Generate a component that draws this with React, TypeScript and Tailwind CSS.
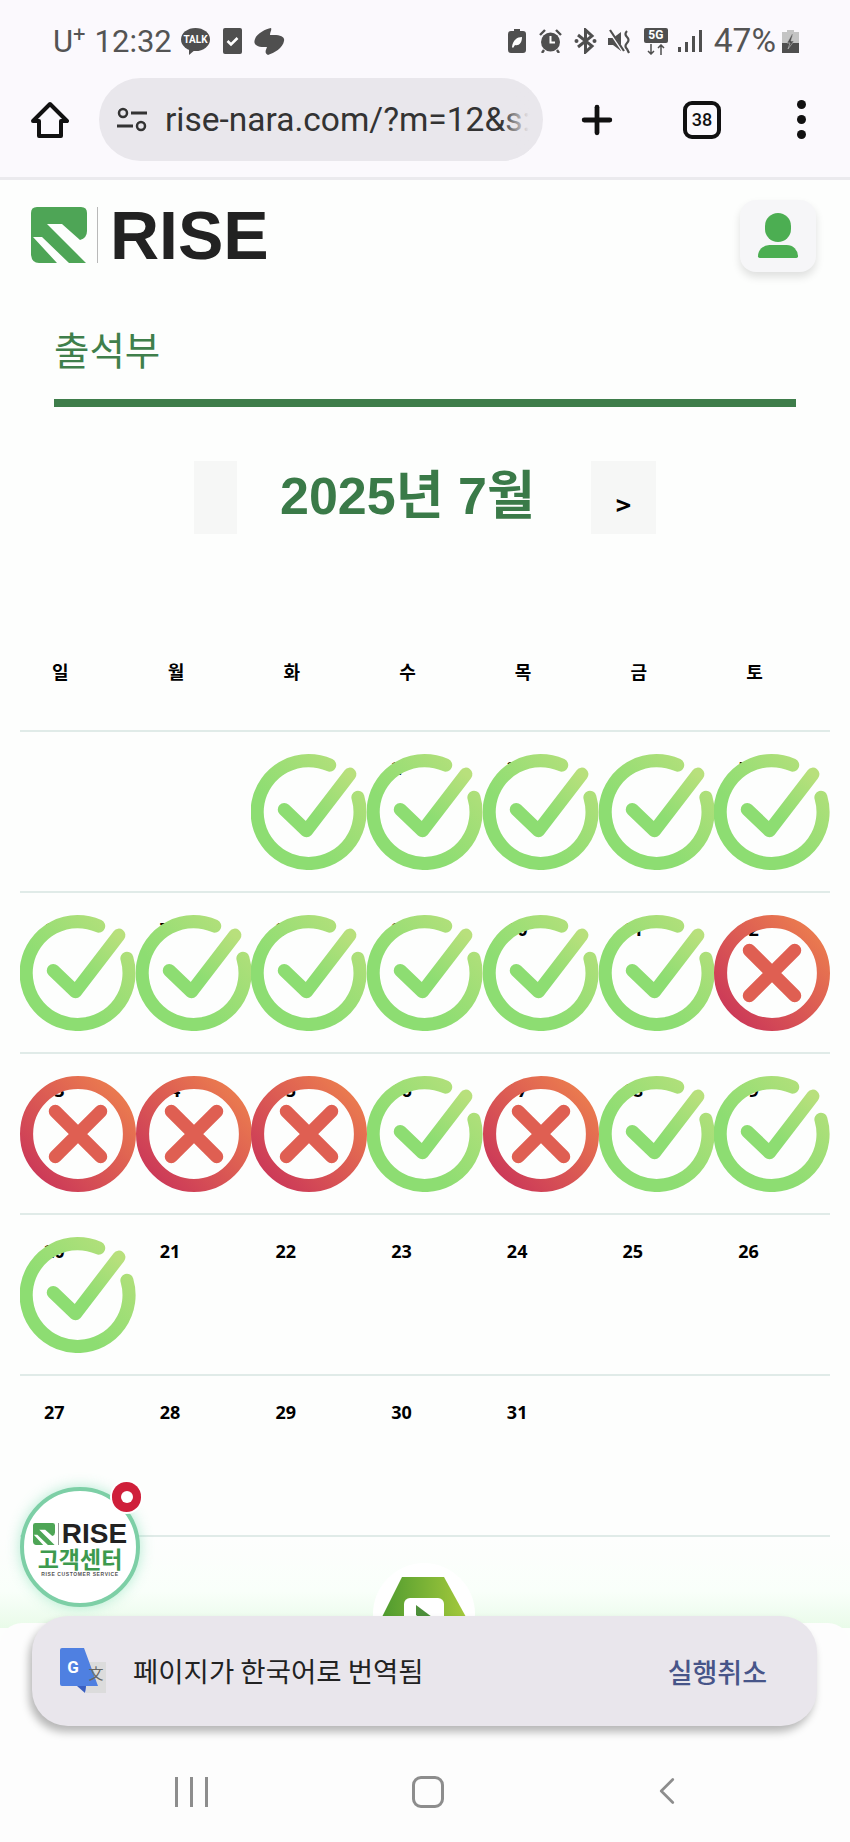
import React from "react";
import { ChevronLeft, Plus } from "lucide-react";

const weekdays = ["일", "월", "화", "수", "목", "금", "토"];

// null = empty cell, status: o = attended, x = missed
type Cell = { day: number; status?: "o" | "x" } | null;

const rows: Cell[][] = [
  [null, null, { day: 1, status: "o" }, { day: 2, status: "o" }, { day: 3, status: "o" }, { day: 4, status: "o" }, { day: 5, status: "o" }],
  [{ day: 6, status: "o" }, { day: 7, status: "o" }, { day: 8, status: "o" }, { day: 9, status: "o" }, { day: 10, status: "o" }, { day: 11, status: "o" }, { day: 12, status: "x" }],
  [{ day: 13, status: "x" }, { day: 14, status: "x" }, { day: 15, status: "x" }, { day: 16, status: "o" }, { day: 17, status: "x" }, { day: 18, status: "o" }, { day: 19, status: "o" }],
  [{ day: 20, status: "o" }, { day: 21 }, { day: 22 }, { day: 23 }, { day: 24 }, { day: 25 }, { day: 26 }],
  [{ day: 27 }, { day: 28 }, { day: 29 }, { day: 30 }, { day: 31 }, null, null],
];

const CheckMark = () => (
  <svg viewBox="0 0 115 115" className="absolute left-0 top-[22px] w-[116px] h-[116px]">
    <defs>
      <linearGradient id="okGrad" x1="0" y1="1" x2="1" y2="0">
        <stop offset="0.35" stopColor="#8ddd72" />
        <stop offset="1" stopColor="#b8e07c" />
      </linearGradient>
    </defs>
    <path
      d="M106 43 A51 51 0 1 1 78 11"
      fill="none"
      stroke="url(#okGrad)"
      strokeWidth="13"
      strokeLinecap="round"
    />
    <path
      d="M33 55 L55 76 L98 20"
      fill="none"
      stroke="url(#okGrad)"
      strokeWidth="13"
      strokeLinecap="round"
      strokeLinejoin="round"
    />
  </svg>
);

const CrossMark = () => (
  <svg viewBox="0 0 115 115" className="absolute left-0 top-[22px] w-[116px] h-[116px]">
    <defs>
      <linearGradient id="noGrad" x1="0" y1="1" x2="1" y2="0">
        <stop offset="0.1" stopColor="#cc3a58" />
        <stop offset="0.9" stopColor="#ea7a4f" />
      </linearGradient>
    </defs>
    <circle cx="57.5" cy="57.5" r="51" fill="none" stroke="url(#noGrad)" strokeWidth="13" />
    <path d="M35 35 L80 80 M80 35 L35 80" stroke="#df5f52" strokeWidth="13" strokeLinecap="round" />
  </svg>
);

const RiseMark = ({ className }: { className: string }) => (
  <svg viewBox="0 0 56 56" className={className}>
    <path
      d="M6 0H50Q56 0 56 6V24Q56 31 49 33L31 17H16L55 56H38L11 30H2L26 56H8Q1 56 0 48V6Q0 0 6 0Z"
      fill="#4ea556"
    />
  </svg>
);

const StatusIconsLeft = () => (
  <div className="flex items-center ml-[9px]">
    <svg viewBox="0 0 29 27" className="w-[29px] h-[27px]">
      <ellipse cx="14.5" cy="11.5" rx="14.5" ry="11.5" fill="#4f4f4f" />
      <path d="M8 19 L8 27 L15 21Z" fill="#4f4f4f" />
      <text x="14.5" y="15" textAnchor="middle" fontSize="10" fontWeight="700" fill="#fff" fontFamily="Roboto, sans-serif">
        TALK
      </text>
    </svg>
    <svg viewBox="0 0 19 26" className="w-[19px] h-[26px] ml-[13px]">
      <rect width="19" height="26" rx="2" fill="#4f4f4f" />
      <path d="M4.5 13 L8 16.5 L14.5 10" fill="none" stroke="#fff" strokeWidth="2.6" />
    </svg>
    <svg viewBox="0 0 31 27" className="w-[31px] h-[27px] ml-3">
      <path
        d="M17 0 C12 1 3 5 1 11 C-1 16 2 19 10 19 L13 19 C12 22 10 25 14 27 C20 25 29 20 30 13 C31 9 27 7 20 7 L16 7 C16 4 18 2 17 0Z"
        fill="#4f4f4f"
      />
    </svg>
  </div>
);

const StatusIconsRight = () => (
  <div className="flex items-center">
    {/* eco battery */}
    <svg viewBox="0 0 18 24" className="w-[18px] h-[24px]">
      <path d="M6 0H12V2H15Q18 2 18 5V21Q18 24 15 24H3Q0 24 0 21V5Q0 2 3 2H6Z" fill="#4f4f4f" />
      <path d="M4 18 C5 11 9 8 14 8 C14 14 11 17 7 16 L5 19Z" fill="#fff" />
    </svg>
    {/* alarm */}
    <svg viewBox="0 0 23 24" className="w-[23px] h-[24px] ml-[13px]">
      <circle cx="11.5" cy="13" r="9.5" fill="#4f4f4f" />
      <path d="M1 6 L6 1 M22 6 L17 1 M5 21 L3 24 M18 21 L20 24" stroke="#4f4f4f" strokeWidth="2.4" />
      <path d="M11.5 7 V13.5 H16" fill="none" stroke="#fff" strokeWidth="2" />
    </svg>
    {/* bluetooth */}
    <svg viewBox="0 0 23 26" className="w-[23px] h-[26px] ml-3">
      <path d="M4 7 L18 18 L11.5 24 V2 L18 8 L4 19" fill="none" stroke="#4f4f4f" strokeWidth="3" />
      <circle cx="2.5" cy="13" r="2" fill="#4f4f4f" />
      <circle cx="20.5" cy="13" r="2" fill="#4f4f4f" />
    </svg>
    {/* vibrate / mute */}
    <svg viewBox="0 0 24 25" className="w-[24px] h-[25px] ml-[11px]">
      <path d="M0 9H5L13 3V22L5 16H0Z" fill="#4f4f4f" />
      <path d="M1 1 L15 22" stroke="#fbf9fd" strokeWidth="3" />
      <path d="M2 1 L16 22" stroke="#4f4f4f" strokeWidth="2.2" />
      <path d="M19 2 Q16 5 19 8 Q22 11 19 14 Q16 17 19 20 L21 24" fill="none" stroke="#4f4f4f" strokeWidth="2.2" />
    </svg>
    {/* 5G */}
    <div className="flex flex-col items-center ml-3 w-[24px]">
      <span className="w-[24px] h-[15px] rounded-[2px] bg-[#4f4f4f] text-white text-[12px] leading-[15px] font-bold text-center font-['Roboto',sans-serif]">
        5G
      </span>
      <svg viewBox="0 0 20 11" className="w-[20px] h-[11px] mt-[1px]">
        <path d="M5 0V10M2 7L5 10L8 7M15 11V1M12 4L15 1L18 4" fill="none" stroke="#4f4f4f" strokeWidth="1.5" />
      </svg>
    </div>
    {/* signal */}
    <div className="flex items-end gap-[4px] ml-[10px] h-[22px]">
      <div className="w-[3px] h-[5px] bg-[#4f4f4f]" />
      <div className="w-[3px] h-[10px] bg-[#4f4f4f]" />
      <div className="w-[3px] h-[16px] bg-[#4f4f4f]" />
      <div className="w-[3px] h-[22px] bg-[#4f4f4f]" />
    </div>
    <span className="ml-3 text-[33.5px] leading-none text-[#545454] font-['Roboto',sans-serif]">47%</span>
    {/* charging battery */}
    <svg viewBox="0 0 17 23" className="w-[17px] h-[23px] ml-[6px]">
      <path d="M5 0H12V2H17V23H0V2H5Z" fill="#c4c4c4" />
      <path d="M0 13H17V23H0Z" fill="#4f4f4f" />
      <path d="M10 4 L5 13 H8 L6 19 L12 11 H9 L11 4Z" fill="#4f4f4f" stroke="#c4c4c4" strokeWidth="0.6" />
    </svg>
  </div>
);

const App: React.FC = () => {
  return (
    <div className="relative w-[850px] h-[1842px] overflow-hidden bg-[#fdfefd] font-['Noto_Sans_CJK_KR','Noto_Sans',sans-serif]">
      {/* browser chrome */}
      <div className="h-[180px] bg-[#fbf9fd] border-b-[3px] border-[#ebeaee]">
        <div className="flex items-center justify-between h-[78px] pl-[53px] pr-[51px] pt-[4px] font-['Roboto',sans-serif] text-[#545454]">
          <div className="flex items-center">
            <span className="text-[31px] leading-none">
              U<sup className="text-[22px] leading-none -top-[10px]">+</sup>
            </span>
            <span className="ml-[9px] text-[31px] leading-none">12:32</span>
            <StatusIconsLeft />
          </div>
          <StatusIconsRight />
        </div>
        <div className="relative flex items-center h-[83px]">
          <svg viewBox="0 0 38 38" className="ml-[31px] w-[38px] h-[38px]">
            <path
              d="M19 3 L36 20 H30 V35 H8 V20 H2Z"
              fill="none"
              stroke="#111"
              strokeWidth="4"
              strokeLinejoin="round"
            />
          </svg>
          <div className="relative flex items-center ml-[30px] w-[444px] h-[83px] rounded-full bg-[#e9e7ec] overflow-hidden">
            <svg viewBox="0 0 30 26" className="ml-[18px] w-[30px] h-[26px] shrink-0">
              <circle cx="6" cy="6" r="4" fill="none" stroke="#333" strokeWidth="2.5" />
              <path d="M14 6H30M0 19H16" stroke="#333" strokeWidth="2.8" />
              <circle cx="24" cy="19" r="4" fill="none" stroke="#333" strokeWidth="2.5" />
            </svg>
            <span className="ml-[18px] w-[372px] whitespace-nowrap overflow-hidden text-[33.5px] leading-[40px] text-[#333] font-['Roboto',sans-serif]">
              rise-nara.com/?m=12&amp;s:
            </span>
            <div className="absolute right-[14px] top-0 w-[28px] h-full bg-gradient-to-r from-transparent to-[#e9e7ec]" />
          </div>
          <Plus className="ml-[32px] w-[44px] h-[44px] text-[#111]" strokeWidth={2.6} />
          <div className="flex items-center justify-center ml-[64px] w-[38px] h-[38px] rounded-[9px] border-[4px] border-[#111] text-[18px] font-medium text-[#111] font-['Roboto',sans-serif]">
            38
          </div>
          <div className="flex flex-col gap-[6px] ml-[76px]">
            <div className="w-[9px] h-[9px] rounded-full bg-[#111]" />
            <div className="w-[9px] h-[9px] rounded-full bg-[#111]" />
            <div className="w-[9px] h-[9px] rounded-full bg-[#111]" />
          </div>
        </div>
      </div>

      {/* site header */}
      <div className="flex items-start justify-between pt-[20px] pl-[31px] pr-[34px] h-[97px]">
        <div className="flex items-center mt-[7px] h-[56px]">
          <RiseMark className="w-[56px] h-[56px]" />
          <div className="ml-[10px] w-px h-[56px] bg-[#b9b9b9]" />
          <span className="ml-[12px] text-[68px] leading-none font-bold text-[#222] font-['Liberation_Sans',sans-serif]">
            RISE
          </span>
        </div>
        <div className="flex flex-col items-center w-[76px] h-[72px] rounded-[16px] bg-[#f6f6f8] shadow-[0_5px_8px_rgba(0,0,0,0.12)]">
          <div className="mt-[13px] w-[26px] h-[29px] rounded-full bg-[#4cae52]" />
          <div className="mt-[3px] w-[40px] h-[13px] rounded-t-[20px] rounded-b-[3px] bg-[#4cae52]" />
        </div>
      </div>

      {/* page title */}
      <div className="mx-[54px] h-[130px] border-b-[8px] border-[#3e7d4a]">
        <h1 className="pt-[49px] text-[38.5px] leading-[44px] font-normal text-[#3f7f4b]">출석부</h1>
      </div>

      {/* month switcher */}
      <div className="relative flex items-start h-[73px] mt-[54px] ml-[194px]">
        <div className="w-[43px] h-[73px] bg-[#f6f7f6]" />
        <h2 className="ml-[43px] w-[311px] text-[52px] leading-[70px] font-bold text-[#3a7a48] font-['Liberation_Sans','Noto_Sans_CJK_KR',sans-serif]">
          2025년 7월
        </h2>
        <div className="w-[65px] h-[73px] pt-[21px] bg-[#f6f7f6] text-center text-[26px] leading-[44px] font-bold text-black">
          &gt;
        </div>
      </div>

      {/* calendar */}
      <div className="mx-[20px] mt-[78px]">
        <div className="grid grid-cols-7 h-[120px] border-b-2 border-[#e0ebe8]">
          {weekdays.map((w) => (
            <div key={w} className="pl-[32px] pt-[46px] text-[18px] leading-[26px] font-bold text-black">
              {w}
            </div>
          ))}
        </div>
        {rows.map((row, i) => (
          <div key={i} className="grid grid-cols-7 h-[161px] border-b-2 border-[#e0ebe8]">
            {row.map((cell, j) => (
              <div key={j} className="relative">
                {cell && (
                  <>
                    <span className="absolute left-[24px] top-[23px] text-[18px] leading-[26px] font-bold text-black font-['Noto_Sans',sans-serif]">
                      {cell.day}
                    </span>
                    {cell.status === "o" && <CheckMark />}
                    {cell.status === "x" && <CrossMark />}
                  </>
                )}
              </div>
            ))}
          </div>
        ))}
      </div>

      {/* glow above bottom sheet */}
      <div className="absolute left-0 right-0 top-[1538px] h-[90px] bg-gradient-to-b from-transparent via-[#f9fffa] via-60% to-[#e9fbe9]" />

      {/* floating nav emblem, cut off by the snackbar */}
      <div className="absolute left-[373px] top-[1563px] flex justify-center w-[102px] h-[102px] rounded-full bg-white">
        <svg viewBox="0 0 84 84" className="mt-[14px] w-[84px] h-[84px]">
          <defs>
            <linearGradient id="hexGrad" x1="0" y1="0" x2="1" y2="0">
              <stop offset="0" stopColor="#4f9b2f" />
              <stop offset="1" stopColor="#a4c93c" />
            </linearGradient>
          </defs>
          <path d="M20 0H62L84 40V84H0V40Z" fill="url(#hexGrad)" />
          <rect x="22" y="21" width="40" height="40" rx="6" fill="#fff" />
          <path d="M34 28L50 40V50L34 38Z" fill="#4d8f3a" />
        </svg>
      </div>

      {/* bottom sheet */}
      <div className="absolute left-0 right-0 top-[1623px] bottom-0 rounded-t-[22px] bg-[#fdfdfd]" />

      {/* customer center button */}
      <div className="absolute left-[20px] top-[1487px] flex flex-col items-center w-[120px] h-[120px] rounded-full bg-white border-[4px] border-[#7dcfa6] shadow-[0_0_14px_rgba(90,210,160,0.45)]">
        <div className="flex items-center mt-[31px] h-[24px]">
          <RiseMark className="w-[22px] h-[22px]" />
          <div className="ml-[3px] w-px h-[22px] bg-[#999]" />
          <span className="ml-[3px] text-[28px] leading-[24px] font-bold text-[#222] font-['Liberation_Sans',sans-serif]">
            RISE
          </span>
        </div>
        <span className="mt-[1px] text-[23px] leading-[22px] font-bold whitespace-nowrap text-[#3d9a4e]">고객센터</span>
        <span className="mt-[2px] text-[5px] leading-[6px] font-bold tracking-[0.6px] whitespace-nowrap text-[#555] font-['Liberation_Sans',sans-serif]">
          RISE CUSTOMER SERVICE
        </span>
      </div>
      <div className="absolute left-[112px] top-[1482px] flex items-center justify-center w-[29px] h-[30px] rounded-full bg-[#cf1f3a] ring-2 ring-white">
        <div className="w-[12px] h-[12px] rounded-full bg-white" />
      </div>

      {/* translate snackbar */}
      <div className="absolute left-[32px] top-[1616px] flex items-center w-[785px] h-[110px] rounded-[36px] bg-[#e9e6ec] shadow-[-3px_6px_8px_rgba(0,0,0,0.28)]">
        <svg viewBox="0 0 46 46" className="ml-[28px] w-[46px] h-[46px] shrink-0">
          <path d="M24 14H46V45H26Z" fill="#dcdcdc" />
          <path d="M2 0H24L38 38H26L25 44L19 38H2Q0 38 0 36V2Q0 0 2 0Z" fill="#4f80e1" />
          <path d="M26 38L25 45L17 38Z" fill="#3a5fc0" />
          <text x="13" y="25" textAnchor="middle" fontSize="17" fontWeight="700" fill="#fff" fontFamily="Roboto, sans-serif">
            G
          </text>
          <text x="36" y="31" textAnchor="middle" fontSize="15" fill="#666" fontFamily="'Noto Sans CJK KR', sans-serif">
            文
          </text>
        </svg>
        <span className="ml-[27px] text-[27.5px] leading-none text-[#222]">페이지가 한국어로 번역됨</span>
        <span className="ml-auto mr-[50px] text-[27px] leading-none font-medium text-[#475589]">실행취소</span>
      </div>

      {/* android nav buttons */}
      <div className="absolute left-[175px] top-[1777px] flex gap-[12px]">
        <div className="w-[3px] h-[30px] bg-[#8d8d8d]" />
        <div className="w-[3px] h-[30px] bg-[#8d8d8d]" />
        <div className="w-[3px] h-[30px] bg-[#8d8d8d]" />
      </div>
      <div className="absolute left-[412px] top-[1776px] w-[32px] h-[32px] rounded-[9px] border-[3px] border-[#8d8d8d]" />
      <ChevronLeft className="absolute left-[644px] top-[1768px] w-[46px] h-[46px] text-[#8d8d8d]" strokeWidth={1.4} />
    </div>
  );
};

export default App;
